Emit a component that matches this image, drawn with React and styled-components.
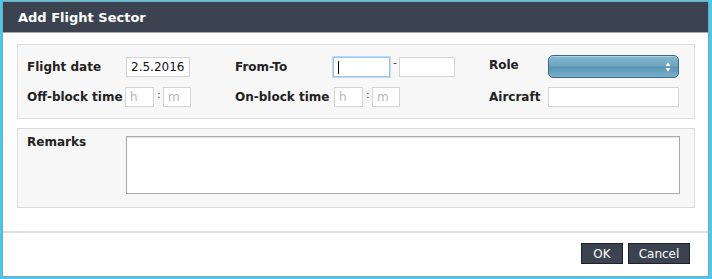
import React from 'react'
import styled, { createGlobalStyle } from 'styled-components'

const GlobalStyle = createGlobalStyle`
    body{
        margin: 0;
        background: #ffffff;
        font-family: "DejaVu Sans", Verdana, sans-serif;
    }
    *{
        box-sizing: border-box;
    }
`;

const Frame = styled.div`
    width: 712px;
    height: 279px;
    border-style: solid;
    border-color: #3ccdfb;
    border-width: 1px 3px 2px 2px;
`;

const Dialog = styled.div`
    height: 100%;
    border: 1px solid #9a9a9a;
    display: flex;
    flex-direction: column;
    background: #ffffff;
`;

const Header = styled.div`
    height: 31px;
    background: #3c4350;
    border-bottom: 1px solid #a8a8a8;
    color: #ffffff;
    font-size: 13px;
    font-weight: bold;
    display: flex;
    align-items: center;
    padding-left: 15px;
`;

const Body = styled.div`
    padding: 11px 13px 23px 14px;
    display: flex;
    flex-direction: column;
    gap: 9px;
    border-bottom: 2px solid #dedede;
`;

const Panel = styled.div`
    background: #f7f7f7;
    border: 1px solid #dcdcdc;
    padding: ${p => p.$pad};
    display: grid;
    grid-template-columns: ${p => p.$cols};
    row-gap: 9px;
    align-items: center;
`;

const Label = styled.div`
    font-size: 12px;
    font-weight: bold;
    color: #222222;
    align-self: ${p => p.$top ? 'start' : 'center'};
    margin-top: ${p => p.$mt || 0}px;
`;

const Field = styled.div`
    display: flex;
    align-items: center;
    gap: 3px;
`;

const TextInput = styled.input`
    width: ${p => p.$w}px;
    height: 20px;
    border: 1px solid ${p => p.$focus ? '#9cc6ee' : '#d4d4d4'};
    box-shadow: ${p => p.$focus ? '0 0 0 1px #bcd9f4' : 'none'};
    background: #ffffff;
    padding: 0 4px;
    margin: 0;
    font-family: "DejaVu Sans", Verdana, sans-serif;
    font-size: 12px;
    color: #111111;
    outline: none;
    &::placeholder{
        color: #b8b8b8;
    }
`;

const Sep = styled.span`
    font-size: 11px;
    color: #444444;
    width: 3px;
    text-align: center;
    margin-top: ${p => p.$up}px;
`;

const CaretWrap = styled.div`
    position: relative;
    display: flex;
    &::after{
        content: '';
        position: absolute;
        left: 5px;
        top: 4px;
        width: 1px;
        height: 13px;
        background: #000000;
    }
`;

const Select = styled.div`
    width: 131px;
    height: 23px;
    border: 1px solid #3f6c82;
    border-radius: 5px;
    background: linear-gradient(#86b9d2 0%, #6ea5c1 45%, #5b96b4 55%, #79b0cb 100%);
    box-shadow: inset 0 1px 0 rgba(255,255,255,0.35);
    display: flex;
    align-items: center;
    justify-content: flex-end;
    padding-right: 7px;
`;

const TextArea = styled.textarea`
    width: 554px;
    height: 58px;
    border: 1px solid #a9a9a9;
    box-shadow: inset 0 1px 1px rgba(0,0,0,0.12);
    background: #ffffff;
    resize: none;
    outline: none;
`;

const Footer = styled.div`
    display: flex;
    justify-content: flex-end;
    gap: 5px;
    padding: 10px 18px 0 0;
`;

const Button = styled.button`
    width: ${p => p.$w}px;
    height: 21px;
    background: #3c4350;
    border: 1px solid #1e2228;
    color: #ffffff;
    font-family: "DejaVu Sans", Verdana, sans-serif;
    font-size: 12px;
    padding: 0;
`;

function Arrows() {
    return (
        <svg width="6" height="10" viewBox="0 0 6 10">
            <path d="M3 0.5 L5.5 4 L0.5 4 Z" fill="#ffffff" />
            <path d="M3 9.5 L5.5 6 L0.5 6 Z" fill="#ffffff" />
        </svg>
    )
}

function TimeField({ ml }) {
    return (
        <Field style={{ marginLeft: ml }}>
            <TextInput $w={29} placeholder="h" />
            <Sep $up={-6}>:</Sep>
            <TextInput $w={28} placeholder="m" />
        </Field>
    )
}

function App() {
    return (
        <>
            <GlobalStyle />
            <Frame>
                <Dialog>
                    <Header>Add Flight Sector</Header>
                    <Body>
                        <Panel $cols="98px 110px 98px 156px 59px 132px" $pad="10px 0 11px 9px">
                            <Label>Flight date</Label>
                            <Field>
                                <TextInput $w={64} defaultValue="2.5.2016" style={{ marginLeft: 1 }} />
                            </Field>
                            <Label>From-To</Label>
                            <Field>
                                <CaretWrap>
                                    <TextInput $w={57} $focus />
                                </CaretWrap>
                                <Sep $up={-9}>-</Sep>
                                <TextInput $w={56} />
                            </Field>
                            <Label $mt={-4}>Role</Label>
                            <Select><Arrows /></Select>

                            <Label>Off-block time</Label>
                            <TimeField ml={0} />
                            <Label>On-block time</Label>
                            <TimeField ml={1} />
                            <Label>Aircraft</Label>
                            <TextInput $w={131} />
                        </Panel>
                        <Panel $cols="99px 554px" $pad="7px 0 13px 9px">
                            <Label $top $mt={-1}>Remarks</Label>
                            <TextArea />
                        </Panel>
                    </Body>
                    <Footer>
                        <Button $w={42}>OK</Button>
                        <Button $w={62}>Cancel</Button>
                    </Footer>
                </Dialog>
            </Frame>
        </>
    )
}

export default App
